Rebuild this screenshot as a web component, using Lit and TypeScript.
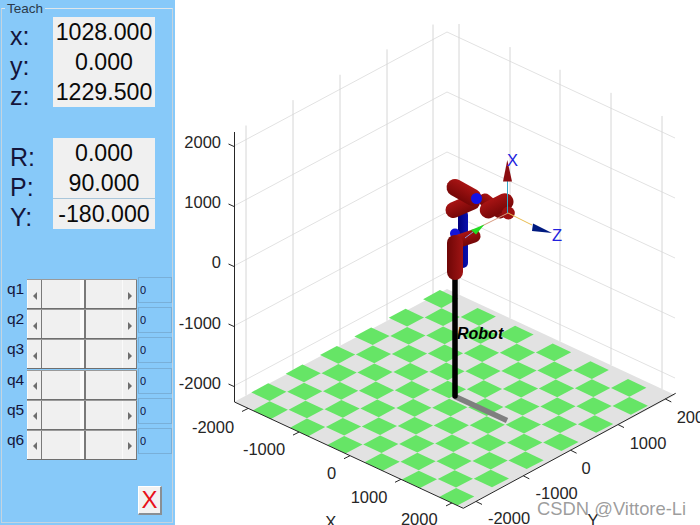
import { LitElement, html, svg, css } from "lit";
import { customElement } from "lit/decorators.js";

type Pt = [number, number];
const P00: Pt = [251.7, 401.4], P10: Pt = [456.7, 496.7], P01: Pt = [440.7, 299], P11: Pt = [647.5, 396.8];
function cell(i: number, j: number): Pt {
  const s = i / 11, t = j / 11;
  return [0, 1].map((k) =>
    (1 - s) * (1 - t) * P00[k] + s * (1 - t) * P10[k] + (1 - s) * t * P01[k] + s * t * P11[k]
  ) as Pt;
}
function tiles() {
  const out: string[] = [];
  const h = 0.49;
  for (let i = 0; i < 12; i++)
    for (let j = 0; j < 12; j++)
      if ((i + j) % 2 === 1) {
        const c = [cell(i - h, j - h), cell(i + h, j - h), cell(i + h, j + h), cell(i - h, j + h)];
        out.push(c.map((p) => p[0].toFixed(1) + "," + p[1].toFixed(1)).join(" "));
      }
  return out;
}

const zLeft = [146, 206, 266, 326, 386];
const leftXs = [246, 293, 340, 387, 433];
const rightXs = [459, 510, 560, 611, 662];
const xTicks = [248, 299, 350, 401, 452];
const yTicks = [476, 523.3, 570.6, 618, 665.3];
const axX = (x: number) => 402 + (x - 234) * 0.4629;
const axY = (x: number) => 508.3 - (x - 463.3) * 0.5413;

interface Cyl { a: Pt; b: Pt; w: number; dark: string; light: string }
const R1 = "#750707", R2 = "#a81414";
const under: Cyl[] = [
  { a: [463, 215], b: [463, 263], w: 10, dark: "#00007a", light: "#0a10b0" },
];
const over: Cyl[] = [
  { a: [456, 242], b: [474, 236], w: 13, dark: R1, light: R2 },
  { a: [455, 243], b: [455, 272], w: 16, dark: "#6e0606", light: "#a01414" },
  { a: [453.5, 210], b: [472, 202], w: 16, dark: R1, light: R2 },
  { a: [455, 187.5], b: [473, 197.5], w: 17, dark: R1, light: R2 },
  { a: [485, 200], b: [500, 212], w: 13, dark: R1, light: R2 },
  { a: [488.3, 210], b: [505, 201.7], w: 17, dark: R1, light: R2 },
];

function cylSvg(c: Cyl, id: string) {
  const dx = c.b[0] - c.a[0], dy = c.b[1] - c.a[1];
  const l = Math.hypot(dx, dy);
  const nx = (-dy / l) * (c.w / 2), ny = (dx / l) * (c.w / 2);
  const mx = c.a[0], my = c.a[1];
  return svg`<linearGradient id=${id} gradientUnits="userSpaceOnUse" x1=${mx - nx} y1=${my - ny} x2=${mx + nx} y2=${my + ny}>
      <stop offset="0" stop-color=${c.light}></stop><stop offset="1" stop-color=${c.dark}></stop></linearGradient>
    <line x1=${c.a[0]} y1=${c.a[1]} x2=${c.b[0]} y2=${c.b[1]} stroke="url(#${id})" stroke-width=${c.w} stroke-linecap="round"></line>`;
}

@customElement("app-root")
export class AppRoot extends LitElement {
  static styles = css`
    :host { display: flex; width: 700px; height: 525px; overflow: hidden; background: #fff; font-family: "Liberation Sans", Arial, sans-serif; }
    .panel { width: 175px; height: 525px; box-sizing: border-box; flex: none; background: #87c9f9; padding-top: 8px; }
    .group { position: relative; height: 515px; margin-left: 1px; width: 172px; box-sizing: border-box; border: 1px solid #c4d4e0; border-top-color: #dfe6ea; padding-top: 8px; }
    .legend { position: absolute; left: 3px; top: -8px; padding: 0 2px; height: 16px; line-height: 16px; font-size: 13.5px; color: #2b3a4a; background: #87c9f9; }
    .fields { display: grid; grid-template-columns: 51px 102px; grid-auto-rows: 30px; }
    .fields.second { margin-top: 31px; }
    .lab { font-size: 25px; line-height: 30px; color: #14143a; padding-left: 8px; transform: translateY(4px); }
    .val { background: #f0f0f0; font-size: 23.2px; line-height: 30px; text-align: center; color: #0a0a0a; }
    .val.rule { border-top: 1px solid #a9c6da; height: 30px; }
    .sliders { margin-top: 51px; display: grid; grid-template-columns: 25px 110px 35px; grid-auto-rows: 30.2px; }
    .q { font-size: 15.5px; line-height: 20px; color: #14143a; padding-left: 5px; }
    .slider { display: flex; height: 30px; background: #f0f0f0; box-sizing: border-box; border-top: 1px solid #9a9a9a; border-bottom: 1px solid #6e6e6e; }
    .arrow { width: 15px; flex: none; box-sizing: border-box; display: flex; align-items: center; justify-content: center; background: #f0f0f0; padding-top: 3px; }
    .arrow.l { border-right: 1px solid #7a7a7a; border-left: 1px solid #fafafa; }
    .arrow.r { border-left: 1px solid #fafafa; border-right: 1px solid #7a7a7a; }
    .tri { width: 0; height: 0; border-top: 4px solid transparent; border-bottom: 4px solid transparent; }
    .tri.l { border-right: 4px solid #6e6e6e; }
    .tri.r { border-left: 4px solid #6e6e6e; }
    .seg { flex: 1; }
    .seg.first { flex: none; width: 38px; }
    .thumb { width: 6px; flex: none; box-sizing: border-box; background: #fbfbfb; border-right: 2px solid #7a7a7a; }
    .box { margin: -2px 0 0 1px; height: 26px; box-sizing: border-box; border: 1px solid #79afd8; font-size: 11px; line-height: 24px; color: #101040; padding-left: 1px; }
    .close { display: block; margin: 26px 0 0 136px; width: 24px; height: 29px; box-sizing: border-box; padding: 0; background: #f2f2f2; border: none; border-right: 2px solid #8a8f94; border-bottom: 2px solid #8a8f94; border-top: 1px solid #fff; border-left: 1px solid #fff; color: #e8101a; font: 24px/26px "Liberation Sans", Arial, sans-serif; text-align: center; }
    .plot { flex: none; width: 525px; height: 525px; display: block; }
    .t { font-family: "Liberation Sans", Arial, sans-serif; font-size: 16.5px; fill: #262626; }
    .robot { font-family: "Liberation Sans", Arial, sans-serif; font-size: 16px; font-weight: bold; font-style: italic; fill: #000; }
    .axl { font-family: "Liberation Sans", Arial, sans-serif; font-size: 16.5px; fill: #2222dd; }
    .mark { font-family: "Liberation Sans", Arial, sans-serif; font-size: 18.4px; fill: #8c8c8c; fill-opacity: 0.85; }
  `;

  private row(q: string) {
    return html`<div class="q">${q}</div>
      <div class="slider">
        <div class="arrow l"><span class="tri l"></span></div><div class="seg first"></div>
        <div class="thumb"></div><div class="seg"></div>
        <div class="arrow r"><span class="tri r"></span></div>
      </div>
      <div class="box">0</div>`;
  }

  private plot() {
    const hLine = "#e2e2e2", vLine = "#d6d6d6";
    return html`<svg class="plot" viewBox="175 0 525 525">
      ${zLeft.map((y, k) => svg`<polyline fill="none" stroke=${hLine} stroke-width="1"
        points="234,${y} 447,${32 + 60 * k} 675,${138 + 60 * k}"></polyline>`)}
      ${leftXs.map((x) => svg`<line x1=${x} x2=${x} y1=${132 - (x - 234) * 0.54} y2=${402 - (x - 234) * 0.5305} stroke=${vLine}></line>`)}
      ${rightXs.map((x) => svg`<line x1=${x} x2=${x} y1=${24 + (x - 459) * 0.453} y2=${289 + (x - 447) * 0.465} stroke=${vLine}></line>`)}

      <polygon points="234,402 463,508 675,395 447,289" fill="#e2e2e2"></polygon>
      ${tiles().map((p) => svg`<polygon points=${p} fill="#66e566"></polygon>`)}

      <polyline points="234.5,132 234.5,402 463.3,508.3 675.7,393.3" fill="none" stroke="#262626" stroke-width="1"></polyline>
      ${zLeft.map((y) => svg`<line x1="234" y1=${y + 0.5} x2="228.5" y2=${y - 2} stroke="#262626"></line>`)}
      ${xTicks.map((x) => svg`<line x1=${x} y1=${axX(x)} x2=${x - 6} y2=${axX(x) + 3} stroke="#262626"></line>`)}
      ${yTicks.map((x) => svg`<line x1=${x} y1=${axY(x)} x2=${x + 6} y2=${axY(x) + 3} stroke="#262626"></line>`)}

      ${[["2000", 148], ["1000", 208], ["0", 268], ["-1000", 328.5], ["-2000", 388.5]].map(
        ([s, y]) => svg`<text class="t" x="221" y=${y} text-anchor="end">${s}</text>`)}
      ${[["-2000", 213, 433], ["-1000", 264, 455], ["0", 331.5, 479], ["1000", 369, 503], ["2000", 419.3, 525], ["X", 330.7, 528]].map(
        ([s, x, y]) => svg`<text class="t" x=${x} y=${y} text-anchor="middle">${s}</text>`)}
      ${[["2000", 695, 423], ["1000", 648, 449], ["0", 586, 474], ["-1000", 556.7, 499], ["-2000", 509, 524], ["Y", 593, 526]].map(
        ([s, x, y]) => svg`<text class="t" x=${x} y=${y} text-anchor="middle">${s}</text>`)}

      <line x1="455" y1="396.5" x2="507" y2="420.5" stroke="#7f7f7f" stroke-width="5.5"></line>
      <line x1="455" y1="278" x2="455" y2="396" stroke="#000" stroke-width="5.5" stroke-linecap="round"></line>

      ${under.map((c, i) => cylSvg(c, "u" + i))}
      <circle cx="455" cy="233.5" r="5" fill="#1414d8"></circle>
      ${over.map((c, i) => cylSvg(c, "o" + i))}
      <circle cx="476.5" cy="198.5" r="5.5" fill="#1212e6"></circle>
      <circle cx="508.3" cy="213" r="6.5" fill="#9c1010"></circle>

      <line x1="507.5" y1="213" x2="507.5" y2="181" stroke="#35a8c8" stroke-width="1"></line>
      <polygon points="507.3,160 503,181.5 512,181.5" fill="#8a0c10"></polygon>
      <line x1="508" y1="213" x2="532" y2="225" stroke="#e8bc50" stroke-width="1"></line>
      <polygon points="552,233 533,223.5 532,231" fill="#001a80"></polygon>
      <line x1="508" y1="213" x2="480" y2="227" stroke="#d89a80" stroke-width="1"></line>
      <polygon points="484.5,224.5 471,230 476,234.5" fill="#22dd22"></polygon>
      <line x1="473" y1="232" x2="465" y2="238" stroke="#8a9ae0" stroke-width="1"></line>
      <text class="axl" x="507" y="166">X</text>
      <text class="axl" x="552" y="241">Z</text>

      <text class="robot" x="457" y="339">Robot</text>
      <text class="mark" x="537" y="515">CSDN @Vittore-Li</text>
    </svg>`;
  }

  render() {
    return html`
      <div class="panel">
        <div class="group">
          <div class="legend">Teach</div>
          <div class="fields">
            <div class="lab">x:</div><div class="val">1028.000</div>
            <div class="lab">y:</div><div class="val">0.000</div>
            <div class="lab">z:</div><div class="val">1229.500</div>
          </div>
          <div class="fields second">
            <div class="lab">R:</div><div class="val">0.000</div>
            <div class="lab">P:</div><div class="val">90.000</div>
            <div class="lab">Y:</div><div class="val rule">-180.000</div>
          </div>
          <div class="sliders">${["q1", "q2", "q3", "q4", "q5", "q6"].map((q) => this.row(q))}</div>
          <button class="close">X</button>
        </div>
      </div>
      ${this.plot()}
    `;
  }
}
